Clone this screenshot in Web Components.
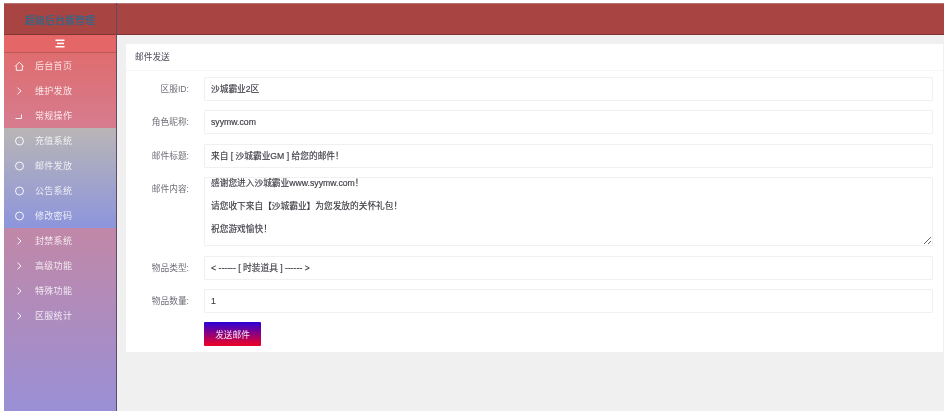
<!DOCTYPE html>
<html lang="zh">
<head>
<meta charset="utf-8">
<title>邮件发送</title>
<style>
    html, body{
        margin: 0;
        padding: 0;
        height: 100%;
        background: #fff;
    }
    body{
        font-family: "Liberation Sans", "Noto Sans CJK SC", sans-serif;
        overflow: hidden;
    }
</style>
</head>
<body>

<admin-page>
    <side-bar slot="side" title-text="超级后台版管理">
        <side-group class="top">
            <side-item icon="home">后台首页</side-item>
            <side-item icon="arrow">维护发放</side-item>
            <side-item icon="corner">常规操作</side-item>
        </side-group>
        <side-group class="sub">
            <side-item icon="circle">充值系统</side-item>
            <side-item icon="circle">邮件发放</side-item>
            <side-item icon="circle">公告系统</side-item>
            <side-item icon="circle">修改密码</side-item>
        </side-group>
        <side-group class="rest">
            <side-item icon="arrow">封禁系统</side-item>
            <side-item icon="arrow">高级功能</side-item>
            <side-item icon="arrow">特殊功能</side-item>
            <side-item icon="arrow">区服统计</side-item>
        </side-group>
    </side-bar>
    <mail-card heading="邮件发送">
        <form-row label="区服ID:">沙城霸业2区</form-row>
        <form-row label="角色昵称:">syymw.com</form-row>
        <form-row label="邮件标题:">来自 [ 沙城霸业GM ] 给您的邮件！</form-row>
        <form-row label="邮件内容:" multiline>感谢您进入沙城霸业www.syymw.com！

请您收下来自【沙城霸业】为您发放的关怀礼包！

祝您游戏愉快！</form-row>
        <form-row label="物品类型:">&lt; ------ [ 时装道具 ] ------ &gt;</form-row>
        <form-row label="物品数量:">1</form-row>
        <send-button>发送邮件</send-button>
    </mail-card>
</admin-page>

<script>
const icons = {
    home: `<path d="M2 6.500 6.300 2.200l4.300 4.300M3.300 5.500V10.300h6V5.500"/>`,
    arrow: `<path d="M4.500 2.700 8 6l-3.500 3.300"/>`,
    corner: `<path d="M2.500 8.500H8.500V4.500"/>`,
    circle: `<circle cx="6.500" cy="6" r="4"/>`
};

class AdminPage extends HTMLElement{
    constructor() {
        super();
        this.attachShadow({ mode: 'open' });
        this.shadowRoot.innerHTML = `
            <style>
                :host{
                    display: grid;
                    grid-template-columns: 113px 1fr;
                    grid-template-rows: 32px 1fr;
                    height: 408px;
                    margin: 3px 0 0 4px;
                    background: #f0f0f0;
                    filter: blur(.45px);
                }
                .top{
                    grid-column: 2;
                    background: #a84442;
                    border-top: 1px solid #b9706e;
                    border-bottom: 1px solid #7f3634;
                    box-sizing: border-box;
                }
                ::slotted([slot=side]){
                    grid-column: 1;
                    grid-row: 1 / 3;
                }
                .main{
                    grid-column: 2;
                    padding: 9px 1px 0 9px;
                    min-width: 0;
                }
            </style>
            <slot name="side"></slot>
            <div class="top"></div>
            <div class="main"><slot></slot></div>
        `;
    }
}

class SideBar extends HTMLElement{
    constructor() {
        super();
        this.attachShadow({ mode: 'open' });
        this.shadowRoot.innerHTML = `
            <style>
                :host{
                    display: flex;
                    flex-direction: column;
                    box-sizing: border-box;
                    border-right: 1px solid rgba(50,40,60,.65);
                    background: linear-gradient(#bf88a9 0, #bf88a9 57%, #9a90d6 100%);
                    min-height: 0;
                }
                .logo{
                    height: 32px;
                    display: flex;
                    align-items: center;
                    justify-content: center;
                    box-sizing: border-box;
                    background: #a84442;
                    border-top: 1px solid #b9706e;
                    border-bottom: 1px solid #7f3634;
                    color: #2c6a8c;
                    font-size: 10px;
                    -webkit-text-stroke: .2px #2c6a8c;
                }
                .toggle{
                    height: 18px;
                    display: flex;
                    align-items: center;
                    justify-content: center;
                    box-sizing: border-box;
                    background: #e56666;
                    border-bottom: 1px solid #b95a5a;
                }
                svg{ display: block; }
            </style>
            <div class="logo"></div>
            <div class="toggle">
                <svg width="10" height="9" viewBox="0 0 10 9" fill="#fff">
                    <rect x="0.500" y="0.500" width="9" height="1.500"/>
                    <rect x="2" y="3.700" width="7" height="1.500"/>
                    <rect x="0.500" y="7" width="9" height="1.500"/>
                </svg>
            </div>
            <slot></slot>
        `;
        this.shadowRoot.querySelector('.logo').textContent = this.getAttribute('title-text');
    }
}

class SideGroup extends HTMLElement{
    constructor() {
        super();
        this.attachShadow({ mode: 'open' });
        this.shadowRoot.innerHTML = `
            <style>
                :host{ display: block; }
                :host(.top){ background: linear-gradient(#df6d6f, #d67c8f); }
                :host(.sub){ background: linear-gradient(#b9b5b6, #8d95dc); }
            </style>
            <slot></slot>
        `;
    }
}

class SideItem extends HTMLElement{
    constructor() {
        super();
        this.attachShadow({ mode: 'open' });
        const icon = icons[this.getAttribute('icon')];
        this.shadowRoot.innerHTML = `
            <style>
                :host{
                    display: flex;
                    align-items: center;
                    height: 25px;
                    padding-left: 9px;
                    gap: 10px;
                    color: rgba(255,255,255,.82);
                    font-size: 9px;
                    letter-spacing: .3px;
                }
                svg{
                    width: 12px;
                    height: 12px;
                    fill: none;
                    stroke: rgba(255,255,255,.9);
                    stroke-width: 1;
                    flex: none;
                }
            </style>
            <svg viewBox="0 0 12 12">${icon}</svg>
            <span><slot></slot></span>
        `;
    }
}

class MailCard extends HTMLElement{
    constructor() {
        super();
        this.attachShadow({ mode: 'open' });
        this.shadowRoot.innerHTML = `
            <style>
                :host{
                    display: block;
                    background: #fff;
                    color: #555;
                }
                .head{
                    height: 26px;
                    line-height: 26px;
                    padding-left: 9px;
                    font-size: 8.700px;
                    color: #4a4a5a;
                    border-bottom: 1px solid #f6f6f6;
                }
                .body{
                    display: flex;
                    flex-direction: column;
                    gap: 9.300px;
                    padding: 6px 10px 6px 0;
                }
            </style>
            <div class="head"></div>
            <div class="body"><slot></slot></div>
        `;
        this.shadowRoot.querySelector('.head').textContent = this.getAttribute('heading');
    }
}

class FormRow extends HTMLElement{
    constructor() {
        super();
        this.attachShadow({ mode: 'open' });
        this.shadowRoot.innerHTML = `
            <style>
                :host{
                    display: grid;
                    grid-template-columns: 63px 1fr;
                    column-gap: 15px;
                    font-size: 8.700px;
                }
                label{
                    text-align: right;
                    line-height: 24px;
                    color: #70707a;
                }
                .box, textarea{
                    box-sizing: border-box;
                    border: 1px solid #f0f0f0;
                    border-radius: 1px;
                    background: #fff;
                    padding: 0 6px;
                    color: #3c3c44;
                    font: inherit;
                    -webkit-text-stroke: .15px #3c3c44;
                }
                .box{
                    height: 24px;
                    line-height: 22px;
                }
                textarea{
                    display: block;
                    width: 100%;
                    height: 69.500px;
                    line-height: 11.400px;
                    overflow: hidden;
                    margin: 0;
                    outline: none;
                }
            </style>
            <label></label>
            <div class="box"><slot></slot></div>
        `;
        this.shadowRoot.querySelector('label').textContent = this.getAttribute('label');
        if (this.hasAttribute('multiline')) {
            const area = document.createElement('textarea');
            area.textContent = this.textContent;
            this.shadowRoot.querySelector('.box').replaceWith(area);
        }
    }
}

class SendButton extends HTMLElement{
    constructor() {
        super();
        this.attachShadow({ mode: 'open' });
        this.shadowRoot.innerHTML = `
            <style>
                :host{
                    display: block;
                    margin-left: 78px;
                }
                button{
                    display: block;
                    width: 57px;
                    height: 24px;
                    padding: 0;
                    border: none;
                    border-radius: 1px;
                    color: #f4e4f0;
                    font: inherit;
                    font-size: 8.700px;
                    background: linear-gradient(#2a00d8 0, #e4002e 92%);
                }
            </style>
            <button><slot></slot></button>
        `;
    }
}

customElements.define('admin-page', AdminPage);
customElements.define('side-bar', SideBar);
customElements.define('side-group', SideGroup);
customElements.define('side-item', SideItem);
customElements.define('mail-card', MailCard);
customElements.define('form-row', FormRow);
customElements.define('send-button', SendButton);
</script>
</body>
</html>
